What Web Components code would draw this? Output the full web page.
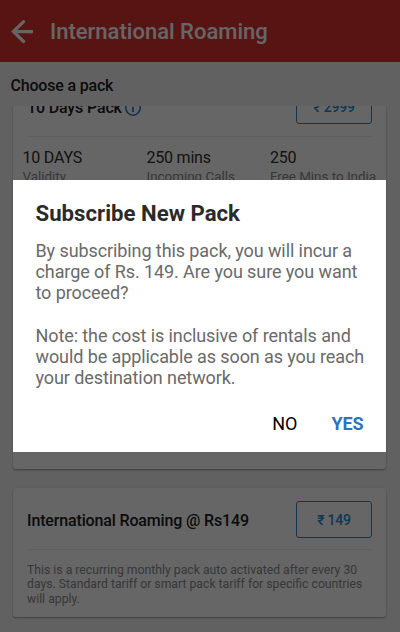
<!DOCTYPE html>
<html lang="en">
<head>
<meta charset="utf-8">
<title>International Roaming</title>
<style>
html,body{margin:0;height:100%;overflow:hidden}
body{font-family:Roboto,"Noto Sans",sans-serif;background:#f3f3f3}
</style>
</head>
<body>
<roaming-screen></roaming-screen>
<script>
const define = (name, html) => {
  const template = document.createElement('template');
  template.innerHTML = html;
  customElements.define(name, class extends HTMLElement {
    constructor() {
      super();
      this.attachShadow({mode: 'open'}).append(template.content.cloneNode(true));
    }
  });
};

define('app-bar', `
<style>
:host{display:flex;align-items:center;height:62px;box-sizing:border-box;padding:2px 0 0 11px;background:#dc3330;color:#fff;font-size:22px;font-weight:500;line-height:26px;flex:none}
svg{width:23px;height:24px;margin-right:16px;flex:none}
</style>
<svg viewBox="0 0 23 24" fill="none" stroke="#fff" stroke-width="3.2" stroke-linecap="round"><path d="M12.6 1.7 2.4 11.6 12.6 21.5M3 11.6h17.5"/><path stroke-linecap="butt" d="M18 11.6h4"/></svg>
<span><slot></slot></span>`);

define('price-button', `
<style>
:host{display:flex;align-items:center;justify-content:center;box-sizing:border-box;width:76px;height:37px;padding-top:2px;border:1.5px solid #268ad0;border-radius:3px;color:#268ad0;font-size:14px;font-weight:500;line-height:16px;letter-spacing:-.2px;flex:none}
</style><slot></slot>`);

define('info-icon', `
<style>:host{display:block;width:16px;height:16px}svg{display:block}</style>
<svg width="16" height="16" viewBox="0 0 16 16"><circle cx="8" cy="8" r="7.2" fill="none" stroke="#2478c4" stroke-width="1.5"/><path d="M8 3.6v1.8M8 6.8v5.2" stroke="#2478c4" stroke-width="1.7"/></svg>`);

define('pack-card', `
<style>
:host{display:block;box-sizing:border-box;margin:0 14px 0 13px;background:#fff;border-radius:3px;box-shadow:0 1px 2px rgba(0,0,0,.38)}
header{display:flex;align-items:center;justify-content:space-between;height:62px;box-sizing:border-box;margin:0 14px;padding-top:1px;border-bottom:1px solid #ededed}
h2{display:flex;align-items:center;gap:3px;margin:0;padding-top:4px;font-size:16px;line-height:20px;font-weight:500;color:#202020;letter-spacing:-.15px}
</style>
<header><h2><slot name="title"></slot></h2><slot name="price"></slot></header>
<slot></slot>`);

define('pack-stat', `
<style>
:host{display:block;color:#303030;font-size:16px;line-height:20px;white-space:nowrap;letter-spacing:-.22px}
small{display:block;color:#8b8b8b;font-size:13.4px;line-height:18px;letter-spacing:0}
</style>
<slot></slot><small><slot name="label"></slot></small>`);

define('confirm-dialog', `
<style>
:host{display:flex;flex-direction:column;box-sizing:border-box;width:373px;height:272px;padding:20px 22.5px 0;background:#fff;color:#6a6a6a;font-size:18px;line-height:21.2px;letter-spacing:-.09px}
h1{margin:0 0 14px;font-size:22.2px;line-height:26px;font-weight:700;color:#2a2a2a;letter-spacing:0}
footer{display:flex;justify-content:flex-end;gap:34px;margin-top:4px}
</style>
<h1><slot name="title"></slot></h1><slot name="body"></slot>
<footer><slot name="action"></slot></footer>`);

define('roaming-screen', `
<style>
:host{display:flex;flex-direction:column;height:632px;width:400px;position:relative;overflow:hidden;background:#f3f3f3}
.heading{height:44px;box-sizing:border-box;padding:13.5px 0 0 10.5px;font-size:16px;line-height:20px;font-weight:500;letter-spacing:-.19px;color:#202020;flex:none}
.list{flex:1;overflow:hidden;display:flex;flex-direction:column;justify-content:flex-end;gap:19.5px;padding-bottom:15.5px}
.active{height:394px;flex:none}
.monthly{height:128.5px;flex:none}
.stats{display:grid;grid-template-columns:124px 123.5px 1fr;padding:11.5px 0 0 9.5px}
.terms{margin:12.5px 14px 0;font-size:12.23px;line-height:14.5px;color:#8b8b8b;white-space:nowrap}
.scrim{position:absolute;inset:0;background:rgba(0,0,0,.6);display:flex;align-items:center;padding-left:13px}
.copy{display:block;margin-bottom:21.1px;white-space:nowrap}
.copy + .copy{margin-bottom:0}
.no{color:#000;margin-top:20.5px}
.yes{color:#2d72bd;font-weight:700;margin-top:20.5px}
</style>
<app-bar>International Roaming</app-bar>
<div class="heading">Choose a pack</div>
<div class="list">
  <pack-card class="active">
    <span slot="title">10 Days Pack</span><info-icon slot="title"></info-icon>
    <price-button slot="price">₹ 2999</price-button>
    <div class="stats">
      <pack-stat>10 DAYS<span slot="label">Validity</span></pack-stat>
      <pack-stat>250 mins<span slot="label">Incoming Calls</span></pack-stat>
      <pack-stat>250<span slot="label">Free Mins to India</span></pack-stat>
    </div>
  </pack-card>
  <pack-card class="monthly">
    <span slot="title">International Roaming @ Rs149</span>
    <price-button slot="price">₹ 149</price-button>
    <div class="terms">This is a recurring monthly pack auto activated after every 30<br>days. Standard tariff or smart pack tariff for specific countries<br>will apply.</div>
  </pack-card>
</div>
<div class="scrim">
  <confirm-dialog>
    <span slot="title">Subscribe New Pack</span>
    <div slot="body" class="copy">By subscribing this pack, you will incur a<br>charge of Rs. 149. Are you sure you want<br>to proceed?</div>
    <div slot="body" class="copy">Note: the cost is inclusive of rentals and<br>would be applicable as soon as you reach<br>your destination network.</div>
    <span slot="action" class="no">NO</span><span slot="action" class="yes">YES</span>
  </confirm-dialog>
</div>`);
</script>
</body>
</html>
